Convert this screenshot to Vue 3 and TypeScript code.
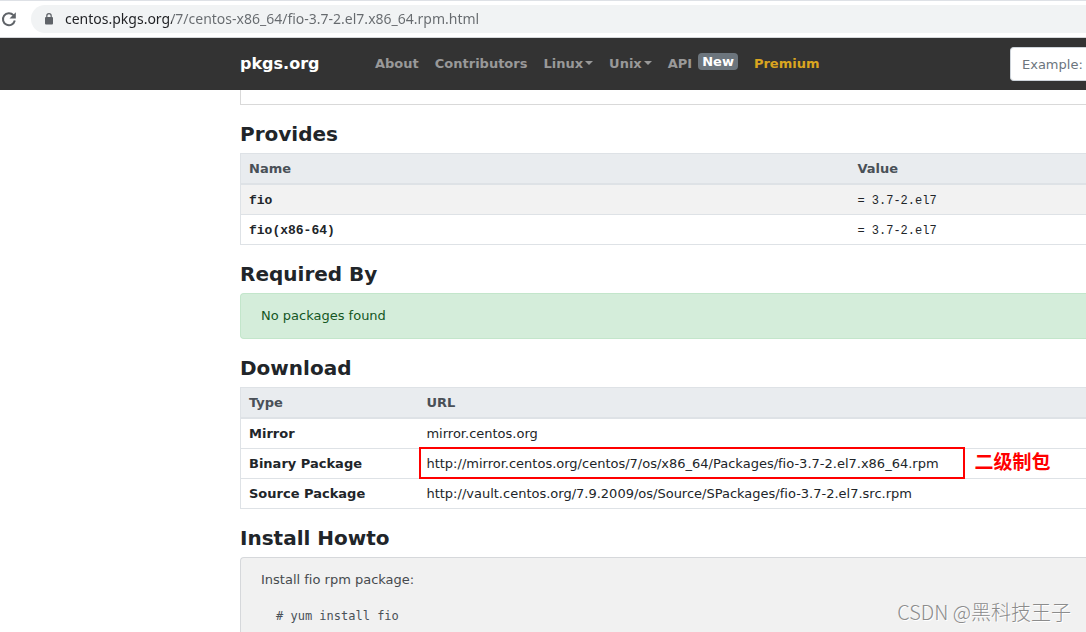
<script setup lang="ts">
import { ref } from 'vue'

interface Provide { name: string; value: string }
interface Download { type: string; url: string; link: boolean; note?: string }

const address = ref('centos.pkgs.org/7/centos-x86_64/fio-3.7-2.el7.x86_64.rpm.html')
const query = ref('')

const provides: Provide[] = [
  { name: 'fio', value: '= 3.7-2.el7' },
  { name: 'fio(x86-64)', value: '= 3.7-2.el7' },
]

const downloads: Download[] = [
  { type: 'Mirror', url: 'mirror.centos.org', link: false },
  {
    type: 'Binary Package',
    url: 'http://mirror.centos.org/centos/7/os/x86_64/Packages/fio-3.7-2.el7.x86_64.rpm',
    link: true,
    note: '二级制包',
  },
  {
    type: 'Source Package',
    url: 'http://vault.centos.org/7.9.2009/os/Source/SPackages/fio-3.7-2.el7.src.rpm',
    link: true,
  },
]
</script>

<template>
  <div class="window">
    <div class="toolbar">
      <button class="reload" type="button" aria-label="Reload">
        <svg width="17" height="16" viewBox="0 0 17 16">
          <path d="M13.4 4.2A6 6 0 1 0 14.8 9.6" fill="none" stroke="#5f6368" stroke-width="2" />
          <path d="M15.8 1.2v6.3H9.5z" fill="#5f6368" />
        </svg>
      </button>
      <div class="omnibox">
        <svg class="lock" width="10" height="12" viewBox="0 0 10 12">
          <rect x="1" y="4" width="8" height="7.5" rx="1" fill="#5f6368" />
          <path d="M2.8 5V2.9a2.2 2.2 0 0 1 4.4 0V5" fill="none" stroke="#5f6368" stroke-width="1.2" />
        </svg>
        <input v-model="address" class="address" type="text" aria-label="Address" spellcheck="false" />
      </div>
    </div>

    <header class="navbar">
      <a class="brand" href="#">pkgs.org</a>
      <nav class="links">
        <a href="#">About</a>
        <a href="#">Contributors</a>
        <button type="button">Linux<span class="caret"></span></button>
        <button type="button">Unix<span class="caret"></span></button>
        <a class="api" href="#">API <span class="badge">New</span></a>
        <a class="premium" href="#">Premium</a>
      </nav>
      <input v-model="query" class="search" type="text" placeholder="Example:" aria-label="Search packages" />
    </header>

    <main class="content">
      <div class="panel-end"></div>

      <h2>Provides</h2>
      <table class="provides">
        <thead>
          <tr><th scope="col">Name</th><th scope="col">Value</th></tr>
        </thead>
        <tbody>
          <tr v-for="item in provides" :key="item.name">
            <th scope="row">{{ item.name }}</th>
            <td>{{ item.value }}</td>
          </tr>
        </tbody>
      </table>

      <h2>Required By</h2>
      <div class="alert">No packages found</div>

      <h2>Download</h2>
      <table class="downloads">
        <thead>
          <tr><th scope="col">Type</th><th scope="col">URL</th></tr>
        </thead>
        <tbody>
          <tr v-for="item in downloads" :key="item.type">
            <th scope="row">{{ item.type }}</th>
            <td>
              <span class="target">
                <a v-if="item.link" :href="item.url">{{ item.url }}</a>
                <template v-else>{{ item.url }}</template>
                <span v-if="item.note" class="frame"></span>
                <span v-if="item.note" class="note">{{ item.note }}</span>
              </span>
            </td>
          </tr>
        </tbody>
      </table>

      <h2>Install Howto</h2>
      <div class="howto">
        <p>Install fio rpm package:</p>
        <pre># yum install fio</pre>
      </div>
    </main>

    <div class="watermark">CSDN @黑科技王子</div>
  </div>
</template>

<style>
body {
  margin: 0;
  background: #fff;
}
</style>

<style scoped>
.window {
  position: relative;
  display: flex;
  flex-direction: column;
  height: 100vh;
  overflow: hidden;
  color: #212529;
  font: 13px/20px Verdana, "DejaVu Sans", sans-serif;
  font-variant-ligatures: none;
}
.window * {
  box-sizing: border-box;
}
a {
  color: inherit;
  text-decoration: none;
}
button {
  padding: 0;
  border: 0;
  background: none;
  color: inherit;
  font: inherit;
}

.toolbar {
  flex: none;
  display: flex;
  align-items: center;
  gap: 14px;
  height: 38px;
  border-top: 1px solid #dee1e6;
  border-bottom: 1px solid #d5d7da;
}
.reload {
  display: flex;
  width: 17px;
}
.omnibox {
  flex: 1;
  display: flex;
  align-items: center;
  gap: 11px;
  height: 28px;
  padding-left: 13px;
  border-radius: 14px 0 0 14px;
  background: #f1f3f4;
}
.lock {
  flex: none;
}
.address {
  flex: 1;
  min-width: 0;
  height: 28px;
  padding: 0 0 2px;
  border: 0;
  outline: 0;
  background: linear-gradient(to right, #202124 107px, #666a6e 107px);
  background-clip: text;
  -webkit-text-fill-color: transparent;
  font: 14px/20px "Noto Sans", "Open Sans", sans-serif;
  font-variant-ligatures: none;
}

.navbar {
  flex: none;
  display: flex;
  align-items: center;
  height: 52px;
  padding-left: 240px;
  background: #333;
  color: #999;
  font-weight: bold;
}
.brand {
  width: 135px;
  color: #fff;
  font-size: 16px;
}
.links {
  display: flex;
  align-items: center;
  gap: 16px;
  white-space: nowrap;
}
.caret {
  display: inline-block;
  margin-left: 2px;
  border: 4px solid transparent;
  border-top-color: currentColor;
  border-bottom: 0;
  vertical-align: 3px;
}
.api {
  display: flex;
  align-items: center;
  gap: 6px;
}
.badge {
  margin-bottom: 6px;
  padding: 0 4px;
  border-radius: 4px;
  background: #6c757d;
  color: #fff;
  line-height: 17px;
}
.premium {
  color: #daa520;
}
.search {
  width: 76px;
  height: 34px;
  margin-left: auto;
  padding: 0 0 0 11px;
  border: 1px solid #ced4da;
  border-right: 0;
  border-radius: 4px 0 0 4px;
  background: #fff;
  font: inherit;
  font-weight: normal;
}
.search::placeholder {
  color: #6c757d;
  opacity: 1;
}

.content {
  flex: 1;
  display: flex;
  flex-direction: column;
  min-height: 0;
  padding-left: 240px;
}
.panel-end {
  flex: none;
  height: 15px;
  border: solid #d9d9d9;
  border-width: 0 0 1px 1px;
}
h2 {
  flex: none;
  margin: 17px 0 7px;
  font-size: 20px;
  line-height: 24px;
}
table {
  flex: none;
  width: 100%;
  border-spacing: 0;
  table-layout: fixed;
  border: solid #dee2e6;
  border-width: 0 0 0 1px;
}
th,
td {
  height: 30px;
  padding: 0 8px;
  border-bottom: 1px solid #dee2e6;
  text-align: left;
}
thead th {
  height: 32px;
  border-top: 1px solid #dee2e6;
  border-bottom-width: 2px;
  background: #e9ecef;
  color: #495057;
}
.provides th:first-child {
  width: 72%;
}
.provides tbody tr:first-child {
  background: #f2f2f2;
}
.provides tbody th,
.provides tbody td {
  padding-top: 2px;
  font-family: "Liberation Mono", monospace;
}
.provides tbody td {
  font-size: 12px;
}
.downloads th:first-child {
  width: 21%;
}
.target {
  position: relative;
  white-space: nowrap;
}
.frame {
  position: absolute;
  inset: -9px -26px -8px -7px;
  border: 2px solid #f00;
  pointer-events: none;
}
.note {
  position: absolute;
  left: 100%;
  top: -5px;
  margin-left: 36px;
  color: #f00;
  font: bold 19px/20px "Noto Sans CJK SC", sans-serif;
}
.alert {
  flex: none;
  padding: 12px 20px;
  border: 1px solid #c3e6cb;
  border-right: 0;
  border-radius: 4px 0 0 4px;
  background: #d4edda;
  color: #155724;
}
.howto {
  flex: 1 0 auto;
  padding: 12px 20px;
  border: 1px solid #d6d8db;
  border-width: 1px 0 0 1px;
  border-radius: 4px 0 0 0;
  background: #f1f1f1;
  color: #464a4e;
}
.howto p {
  margin: 0 0 16px;
}
.howto pre {
  margin: 0 15px;
  color: #495057;
  font: 12px/20px "DejaVu Sans Mono", monospace;
}
.watermark {
  position: absolute;
  right: 15px;
  bottom: 7px;
  color: #8c8c8c;
  font: 300 20px/26px "Noto Sans CJK SC", sans-serif;
  text-shadow: 1px 1px 0 #fff;
}
</style>
